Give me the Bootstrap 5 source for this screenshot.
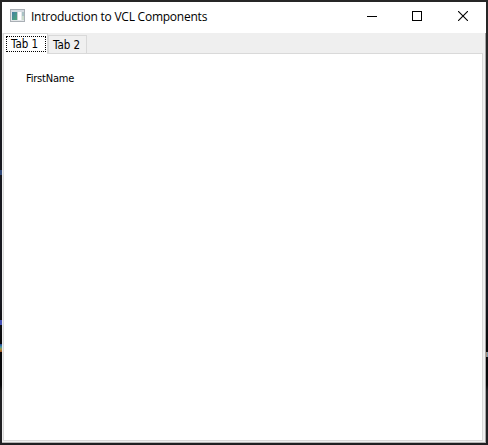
<!DOCTYPE html>
<html lang="en">
<head>
<meta charset="utf-8">
<meta name="viewport" content="width=device-width, initial-scale=1">
<title>Introduction to VCL Components</title>
<link rel="stylesheet" href="https://cdn.jsdelivr.net/npm/bootstrap@5.3.0/dist/css/bootstrap.min.css">
<style>
html,body{height:100%}
body{background:linear-gradient(#262626 0 50px,#17181f 140px 300px,#08080a 345px 385px,#202023 391px);padding:2px;overflow:hidden;color:#000;font-family:"Noto Sans","Open Sans",sans-serif}
.desk-speck{position:absolute;width:2px}
.speck-a{left:0;top:170px;height:5px;background:#304878}
.speck-b{left:0;top:320px;height:5px;background:#4550b5}
.speck-c{left:0;top:344px;height:8px;background:linear-gradient(#263c92,#3c91a2,#a8933b,#a14b25)}
.speck-d{right:0;top:352px;height:5px;background:linear-gradient(90deg,#bd8a66,#609cc0)}
.titlebar{height:31px;padding-left:8px}
.app-icon{margin-top:7px}
.caption{font:12px/18px "Open Sans","Noto Sans",sans-serif;letter-spacing:-.235px;margin-left:6px;padding-top:6px;white-space:nowrap}
.sysbtn{width:46px;height:28px;padding:0;border:0;border-radius:0;line-height:0}
.client{background:#efefef;border-right:1px solid #a5a5a5;border-bottom:1px solid #b5b5b5;padding:0 2px 1px 1px}
.tabs{height:20px;line-height:14px}
.tabs .nav-link{font-size:11.5px;color:#000;border:1px solid #d9d9d9;border-bottom:0;border-radius:0;padding:0;font-family:"DejaVu Sans Condensed","DejaVu Sans",sans-serif}
.tabs .tab-one{width:45px;height:21px;background:#fff;padding:2px 1px 1px 2px;z-index:1}
.tab-focus{display:block;width:40px;height:16px;border:1px dotted #000;padding-left:4px;line-height:14px}
.tabs .tab-two{width:39px;height:18px;margin-top:2px;background:#f0f0f0;padding:2px 0 0 4px}
.pane{border:1px solid #d9d9d9}
.field-label{margin:18px 0 0 22px;font:11px/14px "DejaVu Sans Condensed","DejaVu Sans",sans-serif;letter-spacing:-.2px}
</style>
<script src="https://cdn.jsdelivr.net/npm/bootstrap@5.3.0/dist/js/bootstrap.bundle.min.js"></script>
</head>
<body>
<i class="desk-speck speck-a"></i><i class="desk-speck speck-b"></i><i class="desk-speck speck-c"></i><i class="desk-speck speck-d"></i>
<main class="d-flex flex-column h-100 bg-white">
<header class="titlebar d-flex flex-shrink-0">
<svg class="app-icon flex-shrink-0" width="15" height="13" viewBox="0 0 15 13" shape-rendering="crispEdges"><defs><linearGradient id="g" x2="1" y2="1"><stop stop-color="#457fa5"/><stop offset="1" stop-color="#4fa978"/></linearGradient></defs><path fill="#a9afb5" d="M0 0h15v13H0z"/><path fill="#d5dbe1" d="M1 1h13v2H1z"/><path fill="#e4e7e9" d="M1 3h13v9H1z"/><path fill="url(#g)" d="M2 3h5v8H2z"/><path fill="#c8cdd1" d="M7 3h1v8H7z"/><path fill="#fff" d="M8 3h3v8H8z"/><path fill="#a9c2c4" d="M12 3h2v4h-2z"/><path fill="#cbdccb" d="M12 7h2v4h-2z"/></svg>
<div class="caption flex-grow-1">Introduction to VCL Components</div>
<button class="btn sysbtn" aria-label="Minimize"><svg width="12" height="10" shape-rendering="crispEdges"><path d="M2 5h10v1H2z"/></svg></button>
<button class="btn sysbtn" aria-label="Maximize"><svg width="10" height="10" shape-rendering="crispEdges"><path fill="none" stroke="#000" d="M.5.5h9v9h-9z"/></svg></button>
<button class="btn sysbtn" aria-label="Close"><svg width="10" height="10"><path fill="none" stroke="#000" stroke-width="1.1" d="M0 0l10 10M10 0L0 10"/></svg></button>
</header>
<section class="client d-flex flex-column flex-grow-1">
<nav class="nav tabs flex-nowrap">
<a class="nav-link tab-one position-relative"><span class="tab-focus">Tab 1</span></a>
<a class="nav-link tab-two">Tab 2</a>
</nav>
<div class="pane bg-white flex-grow-1"><div class="field-label">FirstName</div></div>
</section>
</main>
</body>
</html>
